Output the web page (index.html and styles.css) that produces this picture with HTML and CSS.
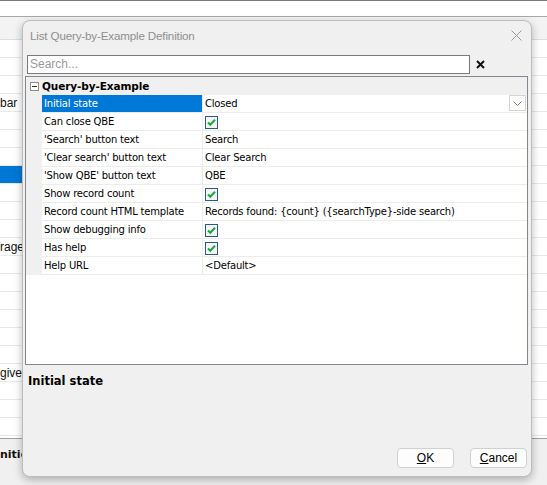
FILE: index.html
```html
<!DOCTYPE html>
<html lang="en">
<head>
    <meta charset="UTF-8">
    <title>List Query-by-Example Definition</title>
    <link rel="stylesheet" href="styles.css">
</head>
<body>
    <div class="app">
        <div class="app-top"></div>
        <div class="app-head"></div>
        <div class="app-rows">
            <div class="app-row"><span class="app-cell"></span></div>
            <div class="app-row"><span class="app-cell"></span></div>
            <div class="app-row"><span class="app-cell"></span></div>
            <div class="app-row"><span class="app-cell">bar</span></div>
            <div class="app-row"><span class="app-cell"></span></div>
            <div class="app-row"><span class="app-cell"></span></div>
            <div class="app-row"><span class="app-cell"></span></div>
            <div class="app-row"><span class="app-cell selected"></span></div>
            <div class="app-row"><span class="app-cell"></span></div>
            <div class="app-row"><span class="app-cell"></span></div>
            <div class="app-row"><span class="app-cell"></span></div>
            <div class="app-row"><span class="app-cell">rage</span></div>
            <div class="app-row"><span class="app-cell"></span></div>
            <div class="app-row"><span class="app-cell"></span></div>
            <div class="app-row"><span class="app-cell"></span></div>
            <div class="app-row"><span class="app-cell"></span></div>
            <div class="app-row"><span class="app-cell"></span></div>
            <div class="app-row"><span class="app-cell"></span></div>
            <div class="app-row"><span class="app-cell">give</span></div>
            <div class="app-row"><span class="app-cell"></span></div>
            <div class="app-row"><span class="app-cell"></span></div>
            <div class="app-row"><span class="app-cell"></span></div>
        </div>
        <div class="app-foot">
            <span class="app-cell">nitio</span>
        </div>
    </div>

    <div class="dialog">
        <div class="titlebar">
            <span class="title">List Query-by-Example Definition</span>
            <svg class="close" width="11" height="11" viewBox="0 0 11 11">
                <path d="M0.5 0.5 L10.5 10.5 M10.5 0.5 L0.5 10.5" stroke="#9a9a9a" stroke-width="1" fill="none"/>
            </svg>
        </div>

        <div class="search-row">
            <div class="search-box">Search...</div>
            <svg class="clear" width="9" height="9" viewBox="0 0 9 9">
                <path d="M1 1 L8 8 M8 1 L1 8" stroke="#111" stroke-width="2" fill="none"/>
            </svg>
        </div>

        <div class="grid">
            <div class="category">
                <span class="gutter">
                    <svg width="9" height="9" viewBox="0 0 9 9">
                        <rect x="0.5" y="0.5" width="8" height="8" fill="#fff" stroke="#8c8c8c"/>
                        <path d="M2 4.5 H7" stroke="#333" stroke-width="1"/>
                    </svg>
                </span>
                <span class="category-name">Query-by-Example</span>
            </div>
            <div class="prop selected">
                <span class="gutter"></span>
                <span class="name">Initial state</span>
                <span class="value">Closed
                    <span class="dropdown">
                        <svg width="9" height="5" viewBox="0 0 9 5"><path d="M0.5 0.5 L4.5 4.5 L8.5 0.5" stroke="#777" fill="none"/></svg>
                    </span>
                </span>
            </div>
            <div class="prop">
                <span class="gutter"></span>
                <span class="name">Can close QBE</span>
                <span class="value"><span class="check"></span></span>
            </div>
            <div class="prop">
                <span class="gutter"></span>
                <span class="name">'Search' button text</span>
                <span class="value">Search</span>
            </div>
            <div class="prop">
                <span class="gutter"></span>
                <span class="name">'Clear search' button text</span>
                <span class="value">Clear Search</span>
            </div>
            <div class="prop">
                <span class="gutter"></span>
                <span class="name">'Show QBE' button text</span>
                <span class="value">QBE</span>
            </div>
            <div class="prop">
                <span class="gutter"></span>
                <span class="name">Show record count</span>
                <span class="value"><span class="check"></span></span>
            </div>
            <div class="prop">
                <span class="gutter"></span>
                <span class="name">Record count HTML template</span>
                <span class="value">Records found: {count} ({searchType}-side search)</span>
            </div>
            <div class="prop">
                <span class="gutter"></span>
                <span class="name">Show debugging info</span>
                <span class="value"><span class="check"></span></span>
            </div>
            <div class="prop">
                <span class="gutter"></span>
                <span class="name">Has help</span>
                <span class="value"><span class="check"></span></span>
            </div>
            <div class="prop">
                <span class="gutter"></span>
                <span class="name">Help URL</span>
                <span class="value">&lt;Default&gt;</span>
            </div>
        </div>

        <div class="description">Initial state</div>

        <div class="buttons">
            <button class="btn"><u>O</u>K</button>
            <button class="btn"><u>C</u>ancel</button>
        </div>
    </div>

    <script>
        // checkbox glyphs
        const tick = '<svg width="13" height="13" viewBox="0 0 13 13">' +
            '<rect x="0.5" y="0.5" width="12" height="12" fill="#f2f4f6" stroke="#28598a"/>' +
            '<path d="M3 6.5 L5.3 8.8 L10 3.8" stroke="#23a23a" stroke-width="2" fill="none"/></svg>';
        document.querySelectorAll('.check').forEach(el => el.innerHTML = tick);
    </script>
</body>
</html>
```

FILE: styles.css
```css
body {
    margin: 0;
    font-family: 'Liberation Sans', Arial, sans-serif;
    font-size: 12px;
    color: #000;
    background-color: #f0f0f0;
    width: 547px;
    height: 485px;
    overflow: hidden;
    position: relative;
}

/* window behind the dialog */
.app {
    display: flex;
    flex-direction: column;
    height: 485px;
    background-color: #fff;
}
.app-top {
    height: 15px;
    border-top: 1px solid #7a7a7a;
    border-bottom: 1px solid #a8a8a8;
    background-color: #fff;
}
.app-head {
    height: 22px;
    background-color: #f3f3f3;
    border-bottom: 1px solid #dedede;
}
.app-row {
    height: 17px;
    border-bottom: 1px solid #e8e8e8;
    display: flex;
}
.app-cell {
    width: 22px;
    display: flex;
    align-items: center;
    white-space: nowrap;
    color: #111;
}
.app-cell.selected {
    background-color: #0078d7;
}
.app-foot {
    margin-top: 2px;
    flex: 1;
    border-top: 1px solid #a0a0a0;
    background-color: #f0f0f0;
    padding-top: 9px;
    font-family: 'DejaVu Sans', sans-serif;
    font-weight: bold;
    font-size: 11px;
}

/* dialog */
.dialog {
    position: absolute;
    left: 22px;
    top: 20px;
    width: 510px;
    height: 457px;
    box-sizing: border-box;
    border: 1px solid #bdbdbd;
    border-radius: 8px;
    background-color: #f0f0f0;
    box-shadow: 0 3px 8px rgba(0, 0, 0, 0.28);
    display: flex;
    flex-direction: column;
}
.titlebar {
    height: 34px;
    display: flex;
    align-items: center;
    justify-content: space-between;
    padding: 0 9px 0 7px;
    box-sizing: border-box;
}
.title {
    color: #8e8e8e;
    font-size: 11.6px;
    letter-spacing: -0.15px;
    margin-top: -6px;
}
.close {
    margin-top: -5px;
}
.search-row {
    height: 19px;
    display: flex;
    align-items: center;
    padding-left: 4px;
}
.search-box {
    width: 443px;
    height: 19px;
    box-sizing: border-box;
    border: 1px solid #7a7a7a;
    background-color: #fff;
    color: #9a9a9a;
    padding-left: 2px;
    line-height: 17px;
}
.clear {
    margin-left: 6px;
}

/* property grid */
.grid {
    margin: 2px 3px 0 2px;
    height: 289px;
    box-sizing: border-box;
    border: 1px solid #828790;
    background-color: #fff;
    font-family: 'DejaVu Sans', sans-serif;
    font-size: 10px;
    letter-spacing: -0.2px;
}
.category {
    height: 18px;
    display: flex;
    align-items: center;
    background-color: #f0f0f0;
}
.gutter {
    width: 16px;
    flex: none;
    display: flex;
    align-items: center;
    justify-content: center;
    align-self: stretch;
    background-color: #f0f0f0;
}
.category-name {
    font-weight: bold;
    font-size: 10.5px;
    letter-spacing: -0.1px;
}
.prop {
    height: 18px;
    display: flex;
}
.name {
    width: 160px;
    flex: none;
    box-sizing: border-box;
    padding-left: 2px;
    border-bottom: 1px solid #ececec;
    display: flex;
    align-items: center;
    white-space: nowrap;
}
.prop.selected .name {
    background-color: #0078d7;
    color: #fff;
}
.value {
    flex: 1;
    box-sizing: border-box;
    border-left: 1px solid #ececec;
    border-bottom: 1px solid #ececec;
    padding-left: 2px;
    display: flex;
    align-items: center;
    white-space: nowrap;
    position: relative;
}
.check {
    display: flex;
    margin-top: 1px;
}
.dropdown {
    position: absolute;
    right: 1px;
    top: 0;
    width: 17px;
    height: 16px;
    box-sizing: border-box;
    border: 1px solid #d4d4d4;
    background-color: #fff;
    display: flex;
    align-items: center;
    justify-content: center;
}

.description {
    flex: 1;
    padding: 9px 0 0 5px;
    font-family: 'DejaVu Sans', sans-serif;
    font-weight: bold;
    font-size: 11.5px;
}
.buttons {
    display: flex;
    justify-content: flex-end;
    gap: 16px;
    padding: 0 4px 8px 0;
}
.btn {
    width: 57px;
    height: 20px;
    box-sizing: border-box;
    border: 1px solid #d0d0d0;
    border-radius: 4px;
    background-color: #fdfdfd;
    font-family: 'Liberation Sans', Arial, sans-serif;
    font-size: 12px;
    color: #000;
    padding: 0;
}
```
